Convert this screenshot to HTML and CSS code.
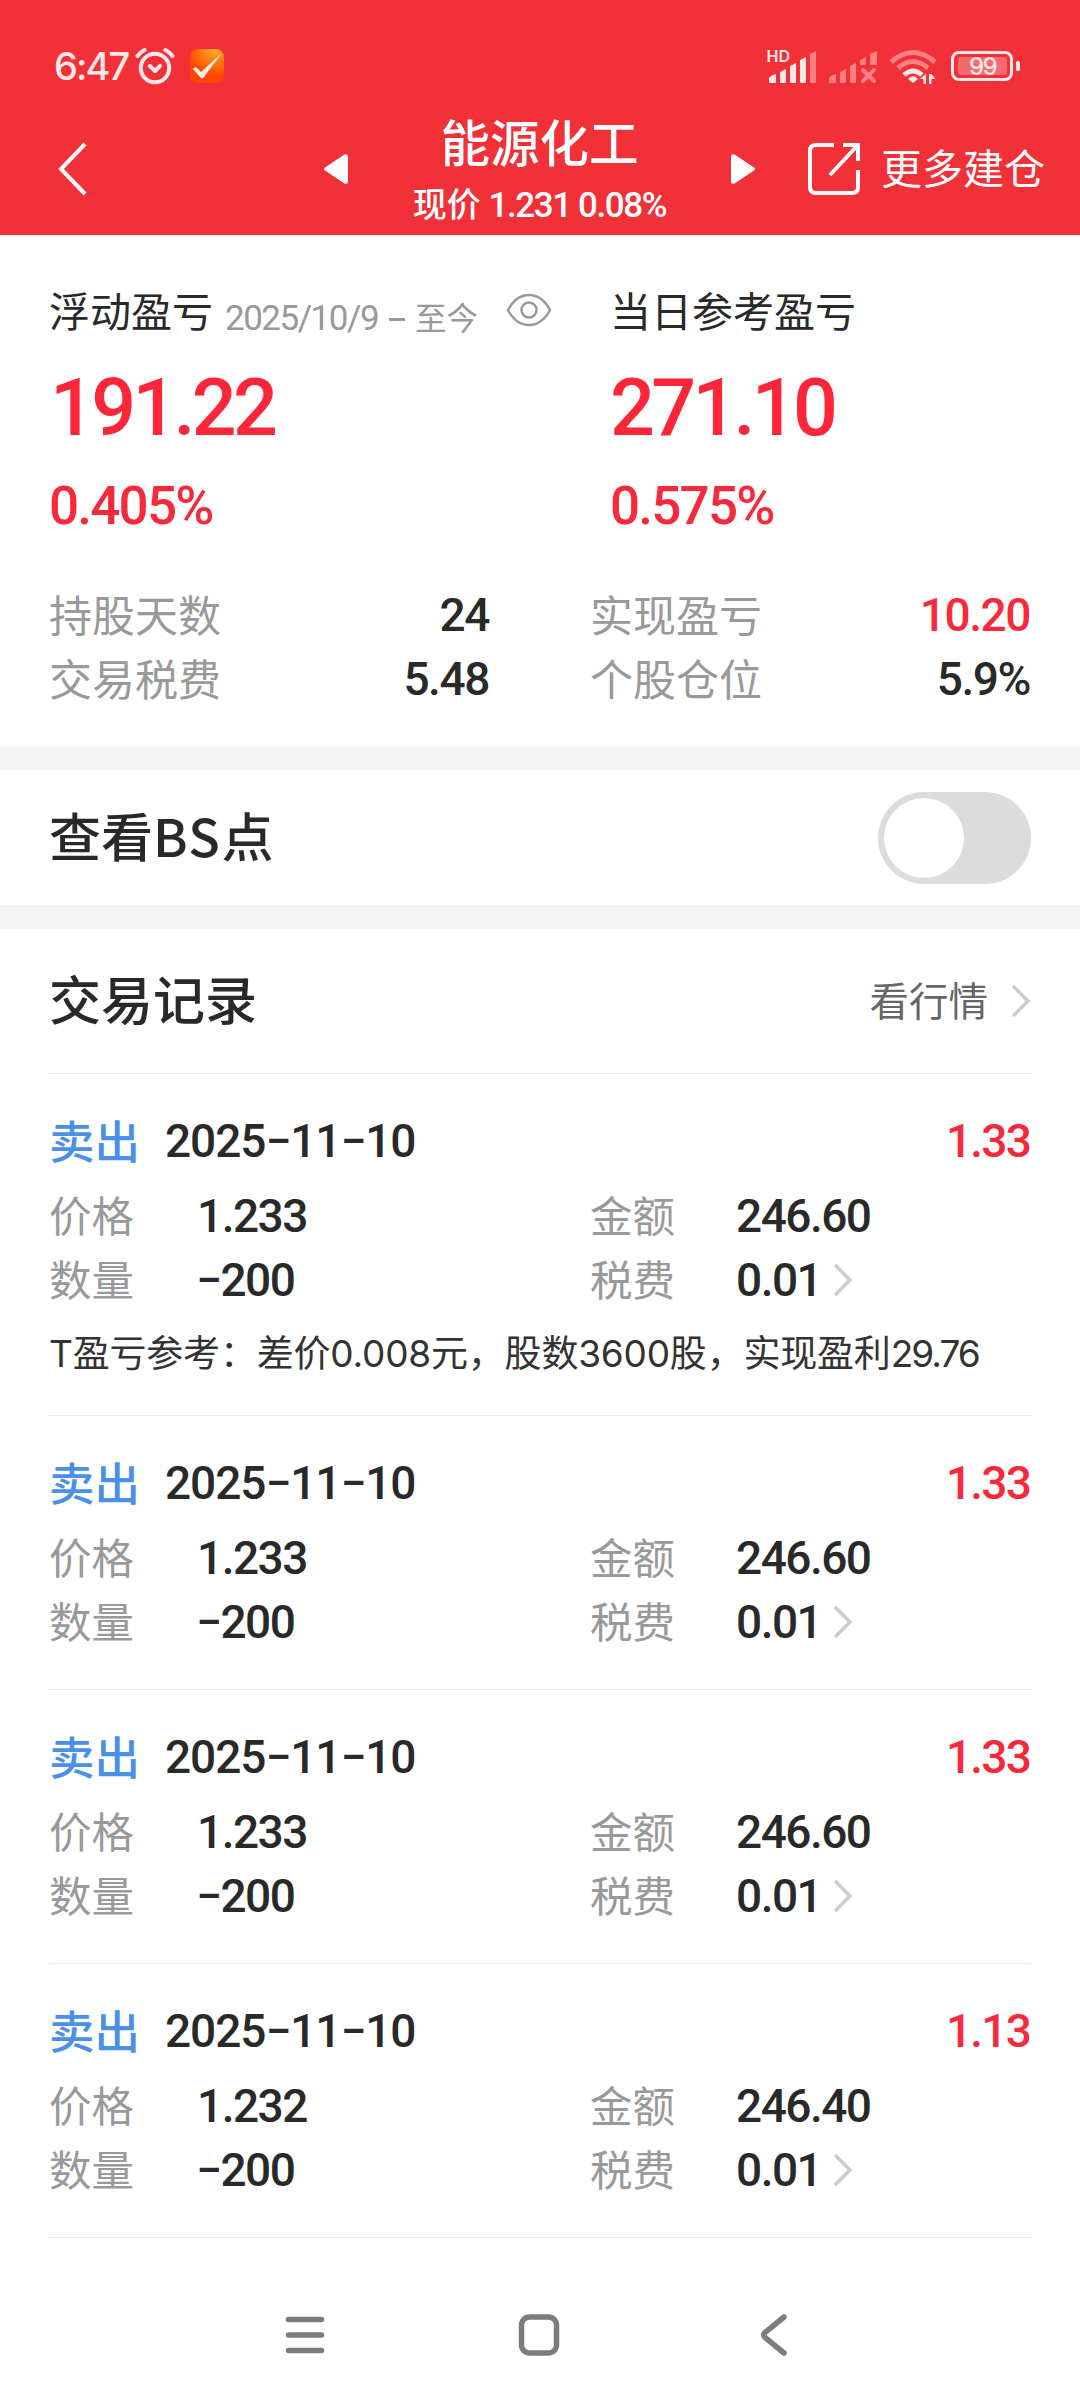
FILE: index.html
```html
<!DOCTYPE html>
<html lang="zh-CN">
<head>
    <meta charset="UTF-8">
    <meta name="viewport" content="width=device-width, initial-scale=1.0">
    <title>能源化工</title>
    <link rel="stylesheet" href="styles.css">
</head>
<body>
<header class="header">
    <div class="status">
        <span class="time">6:47</span>
        <svg class="alarm" width="40" height="38" viewBox="0 0 40 38" fill="none" stroke="#ffe6e7" stroke-width="4" stroke-linecap="round" stroke-linejoin="round">
            <circle cx="20" cy="21" r="14.2"/>
            <path d="M15 19l5 5 5-5M2.500 9q3-4 7-6M37.500 9q-3-4-7-6"/>
        </svg>
        <svg class="todo" width="34" height="34" viewBox="0 0 34 34">
            <defs>
                <radialGradient id="og" cx="0.75" cy="0" r="0.8">
                    <stop offset="0" stop-color="#ffb325"/>
                    <stop offset="1" stop-color="#ff4600"/>
                </radialGradient>
            </defs>
            <rect width="34" height="34" rx="8" fill="url(#og)"/>
            <path d="M3 20q2-3 4-1l4 4L31 5 14 28q-2 3-4 0z" fill="#fff0e6"/>
        </svg>
        <svg class="signals" width="256" height="40" viewBox="765 46 256 40">
            <g fill="#ffe6e7">
                <path d="M769 82v-4q2-3 7-4v8q0 1-1 1h-5q-1 0-1-1zM780 82V72l6-3v13q0 1-1 1h-4q-1 0-1-1zM790 82V66l6-3v19q0 1-1 1h-4q-1 0-1-1zM800 82V60l6-3v25q0 1-1 1h-4q-1 0-1-1z"/>
                <path d="M913 83l-5-4q5-6 10 0z"/>
                <path d="M926 74v10h-2.500v-5h-3.500zM929 84V74h2.500l4 5H931.500v5z"/>
                <rect x="1016" y="61" width="4" height="10" rx="1.500"/>
            </g>
            <g fill="#ff7f83">
                <path d="M810 82V54l6-3v31q0 1-1 1h-4q-1 0-1-1zM829 82v-4q2-3 7-4v8q0 1-1 1h-5q-1 0-1-1zM840 82V72l6-3v13q0 1-1 1h-4q-1 0-1-1zM850 82V66l6-3v19q0 1-1 1h-4q-1 0-1-1zM860 65v-5l6-3v8zM870 65V54l7-3v14z"/>
                <rect x="958" y="57" width="49" height="18" rx="3" fill="#f56a6f"/>
            </g>
            <path d="M863 70l11 11M874 70l-11 11" fill="none" stroke="#ff7f83" stroke-width="4" stroke-linecap="round"/>
            <g fill="none" stroke-width="5">
                <path d="M891 62q22-19 44 0M898 68q15-13 30 0" stroke="#ff7f83"/>
                <path d="M904 75q9-8 18 0" stroke="#ffe6e7"/>
                <rect x="952.500" y="52.500" width="59" height="27" rx="6.500" stroke="#ffe6e7" stroke-width="3"/>
            </g>
            <text x="766.500" y="62" class="hd">HD</text>
            <text x="982.500" y="75" text-anchor="middle" class="level">99</text>
        </svg>
    </div>
    <div class="navbar">
        <svg class="back" width="32" height="54" viewBox="0 0 32 54" fill="none" stroke="#fff" stroke-width="4">
            <path d="M28 2L4 27l24 25"/>
        </svg>
        <svg class="prev" width="24" height="30" viewBox="0 0 24 30" fill="#fff">
            <path d="M1 13.500L20 .8q4-2 4 2v24.400q0 4-4 2L1 16.500q-2-1.500 0-3z"/>
        </svg>
        <div class="heading">
            <h1>能源化工</h1>
            <p>现价 <span class="num">1.231 0.08%</span></p>
        </div>
        <svg class="next" width="24" height="30" viewBox="0 0 24 30" fill="#fff">
            <path d="M23 13.500L4 .8q-4-2-4 2v24.400q0 4 4 2l19-12.700q2-1.500 0-3z"/>
        </svg>
        <svg class="share" width="54" height="54" viewBox="0 0 54 54" fill="none" stroke="#fff" stroke-width="4">
            <path d="M27 3H9Q3 3 3 9v36q0 6 6 6h36q6 0 6-6V28M36 3h15v16M50 4L23 33"/>
        </svg>
        <span class="more">更多建仓</span>
    </div>
</header>

<section class="summary">
    <div class="totals">
        <div class="total">
            <div class="label">浮动盈亏 <span class="range"><span class="num">2025/10/9</span> <i></i>至今</span>
                <svg class="eye" width="46" height="34" viewBox="0 0 46 34" fill="none" stroke="#999" stroke-width="2.500">
                    <path d="M2 17Q10 2 23 2t21 15Q36 32 23 32T2 17z"/>
                    <circle cx="23" cy="17" r="7.500"/>
                </svg>
            </div>
            <div class="num big one">191.22</div>
            <div class="num pct">0.405%</div>
        </div>
        <div class="total">
            <div class="label">当日参考盈亏</div>
            <div class="num big">271.10</div>
            <div class="num pct">0.575%</div>
        </div>
    </div>
    <div class="stats">
        <div class="stat"><span>持股天数</span><b class="num">24</b></div>
        <div class="stat"><span>实现盈亏</span><b class="num red">10.20</b></div>
        <div class="stat"><span>交易税费</span><b class="num">5.48</b></div>
        <div class="stat"><span>个股仓位</span><b class="num">5.9%</b></div>
    </div>
</section>

<section class="bs">
    <h2>查看<span class="latin">BS</span>点</h2>
    <div class="switch"></div>
</section>

<section class="records">
    <div class="records-head">
        <h2>交易记录</h2>
        <span class="quote">看行情</span>
        <svg class="arrow" width="20" height="34" viewBox="0 0 20 34"><path d="M2 2l15 15L2 32"/></svg>
    </div>

    <div class="record">
        <div class="top"><span class="side">卖出</span><b class="num">2025−11−10</b><b class="num red">1.33</b></div>
        <div class="grid">
            <span>价格</span><b class="num one">1.233</b><span>金额</span><b class="num">246.60</b>
            <span>数量</span><b class="num">−200</b><span>税费</span>
            <b class="num">0.01<svg class="arrow" width="20" height="34" viewBox="0 0 20 34"><path d="M2 2l15 15L2 32"/></svg></b>
        </div>
        <p class="note">T盈亏参考：差价0.008元，股数3600股，实现盈利<span>29.76</span></p>
    </div>

    <div class="record">
        <div class="top"><span class="side">卖出</span><b class="num">2025−11−10</b><b class="num red">1.33</b></div>
        <div class="grid">
            <span>价格</span><b class="num one">1.233</b><span>金额</span><b class="num">246.60</b>
            <span>数量</span><b class="num">−200</b><span>税费</span>
            <b class="num">0.01<svg class="arrow" width="20" height="34" viewBox="0 0 20 34"><path d="M2 2l15 15L2 32"/></svg></b>
        </div>
    </div>

    <div class="record">
        <div class="top"><span class="side">卖出</span><b class="num">2025−11−10</b><b class="num red">1.33</b></div>
        <div class="grid">
            <span>价格</span><b class="num one">1.233</b><span>金额</span><b class="num">246.60</b>
            <span>数量</span><b class="num">−200</b><span>税费</span>
            <b class="num">0.01<svg class="arrow" width="20" height="34" viewBox="0 0 20 34"><path d="M2 2l15 15L2 32"/></svg></b>
        </div>
    </div>

    <div class="record">
        <div class="top"><span class="side">卖出</span><b class="num">2025−11−10</b><b class="num red">1.13</b></div>
        <div class="grid">
            <span>价格</span><b class="num one">1.232</b><span>金额</span><b class="num">246.40</b>
            <span>数量</span><b class="num">−200</b><span>税费</span>
            <b class="num">0.01<svg class="arrow" width="20" height="34" viewBox="0 0 20 34"><path d="M2 2l15 15L2 32"/></svg></b>
        </div>
    </div>
</section>

<nav class="sysnav">
    <svg width="40" height="42" viewBox="0 0 40 42"><path d="M3.500 5.500h33M3.500 21h33M3.500 36.500h33"/></svg>
    <svg width="42" height="42" viewBox="0 0 42 42"><rect x="3.500" y="3" width="35" height="36" rx="8"/></svg>
    <svg width="28" height="42" viewBox="0 0 28 42"><path d="M24 3L5 18.500q-2.500 2.500 0 5L24 39"/></svg>
</nav>
</body>
</html>
```
FILE: styles.css
```css
* {
    box-sizing: border-box;
    margin: 0;
    padding: 0;
}

body {
    width: 1080px;
    height: 2400px;
    overflow: hidden;
    background: #fff;
    color: #292929;
    font-family: "Noto Sans CJK SC", sans-serif;
}

svg {
    display: block;
    flex: none;
}

.num {
    font-family: Roboto, "Noto Sans CJK SC", sans-serif;
    font-weight: 500;
    white-space: nowrap;
}

.red {
    color: #f62a3b;
}

/* header */
.header {
    height: 235px;
    background: #f13038;
    color: #fff;
}

.status {
    display: flex;
    align-items: center;
    height: 102px;
    padding: 30px 59px 0 54px;
}

.time {
    width: 81px;
    color: #ffe6e7;
    font: 500 38px/40px Inter, sans-serif;
    letter-spacing: -2px;
}

.todo {
    margin-left: 15px;
}

.signals {
    margin-left: auto;
}

.hd, .level {
    fill: #ffe6e7;
    font: 600 16px Inter, sans-serif;
}

.level {
    font-size: 24px;
    font-weight: 500;
    letter-spacing: -1.500px;
}

.navbar {
    display: flex;
    align-items: center;
    height: 132px;
    padding: 1px 0 0 57px;
}

.prev {
    margin-left: 235px;
}

.heading {
    width: 383px;
    text-align: center;
}

.heading h1 {
    font-size: 49.500px;
    font-weight: 500;
    line-height: 60px;
}

.heading p {
    margin-top: 14px;
    padding-bottom: 2px;
    font-size: 34px;
    font-weight: 500;
    line-height: 36px;
    white-space: nowrap;
}

.heading .num {
    font-size: 35px;
    letter-spacing: -1.400px;
}

.share {
    margin-left: 52px;
}

.more {
    margin-left: 20px;
    padding-bottom: 5px;
    font-size: 41px;
    line-height: 44px;
}

/* summary */
.summary {
    height: 535px;
    padding: 53px 49px 0;
    border-bottom: 24px solid #f4f4f4;
}

.totals {
    display: grid;
    grid-template-columns: 561px 1fr;
}

.label {
    display: flex;
    align-items: baseline;
    height: 44px;
    font-size: 41px;
    line-height: 42px;
    white-space: nowrap;
}

.range {
    display: flex;
    align-items: baseline;
    margin-left: 12px;
    padding-top: 3px;
    color: #999;
    font-size: 31.500px;
    transform: translateY(3px);
}

.range .num {
    font-size: 35px;
    font-weight: 400;
    letter-spacing: -1.500px;
}

.range i {
    align-self: center;
    width: 16px;
    height: 3px;
    margin: 3px 10px 0 11px;
    background: #999;
}

.eye {
    align-self: center;
    margin-left: 28px;
}

.big {
    margin-top: 36px;
    color: #fe2638;
    font-size: 79px;
    line-height: 80px;
    letter-spacing: -3.700px;
}

.pct {
    margin-top: 29px;
    color: #f62a3b;
    font-size: 53px;
    line-height: 58px;
    letter-spacing: -1.800px;
}

.one {
    padding-left: 1px;
}

.stats {
    display: grid;
    grid-template-columns: 440px 440px;
    column-gap: 101px;
    margin-top: 48px;
}

.stat {
    display: flex;
    justify-content: space-between;
    height: 64px;
    font-size: 43px;
    line-height: 60px;
}

.stat span {
    color: #999;
}

.stat .num {
    font-size: 46px;
    line-height: 64px;
    letter-spacing: -1.400px;
}

/* BS switch */
.bs {
    display: flex;
    justify-content: space-between;
    align-items: center;
    height: 159px;
    padding: 0 49px;
    border-bottom: 24px solid #f4f4f4;
}

h2 {
    padding-bottom: 6px;
    font-size: 52px;
    font-weight: 500;
    line-height: 60px;
}

.latin {
    letter-spacing: 1.500px;
}

.switch {
    width: 153px;
    height: 92px;
    padding: 6px;
    border-radius: 46px;
    background: #dcdcdc;
}

.switch::before {
    content: "";
    display: block;
    width: 80px;
    height: 80px;
    border-radius: 50%;
    background: #fff;
}

/* records */
.records {
    padding: 0 49px;
}

.records-head {
    display: flex;
    align-items: center;
    height: 145px;
    border-bottom: 1px solid #ebebeb;
}

.quote {
    margin: 0 23px 5px auto;
    color: #666;
    font-size: 39.500px;
    line-height: 44px;
}

.arrow {
    fill: none;
    stroke: #ccc;
    stroke-width: 3.500;
}

.record {
    padding: 34px 0 35px;
    border-bottom: 1px solid #ebebeb;
}

.top {
    display: flex;
    height: 66px;
    margin-bottom: 10px;
    line-height: 66px;
}

.side {
    width: 116px;
    color: #4a90e8;
    font-size: 45.500px;
    font-weight: 500;
    line-height: 63px;
}

.top .num, .grid .num {
    font-size: 46px;
    letter-spacing: -1.500px;
}

.top .num {
    letter-spacing: -1.050px;
}

.top .red {
    margin: 0 1px 0 auto;
    letter-spacing: -1.800px;
}

.grid {
    display: grid;
    grid-template-columns: 147px 394px 146px 1fr;
    grid-auto-rows: 64px;
    line-height: 64px;
}

.grid span {
    color: #999;
    font-size: 42.500px;
    line-height: 60px;
}

.grid .num {
    display: flex;
    align-items: center;
}

.grid .arrow {
    margin-left: 12px;
}

.note {
    height: 40px;
    margin: 21px 0 7px;
    color: #333;
    font: 37px/42px Inter, "Noto Sans CJK SC", sans-serif;
    letter-spacing: -0.200px;
    white-space: nowrap;
}

.note span {
    letter-spacing: -2px;
}

/* system navigation */
.sysnav {
    display: flex;
    align-items: center;
    height: 130px;
    margin-top: 32px;
    padding-left: 285px;
    fill: none;
    stroke: #7c7c7c;
    stroke-width: 5.500;
    stroke-linecap: round;
}

.sysnav svg + svg {
    margin-left: 193px;
}

.sysnav svg:last-child {
    margin-left: 200px;
}
```
